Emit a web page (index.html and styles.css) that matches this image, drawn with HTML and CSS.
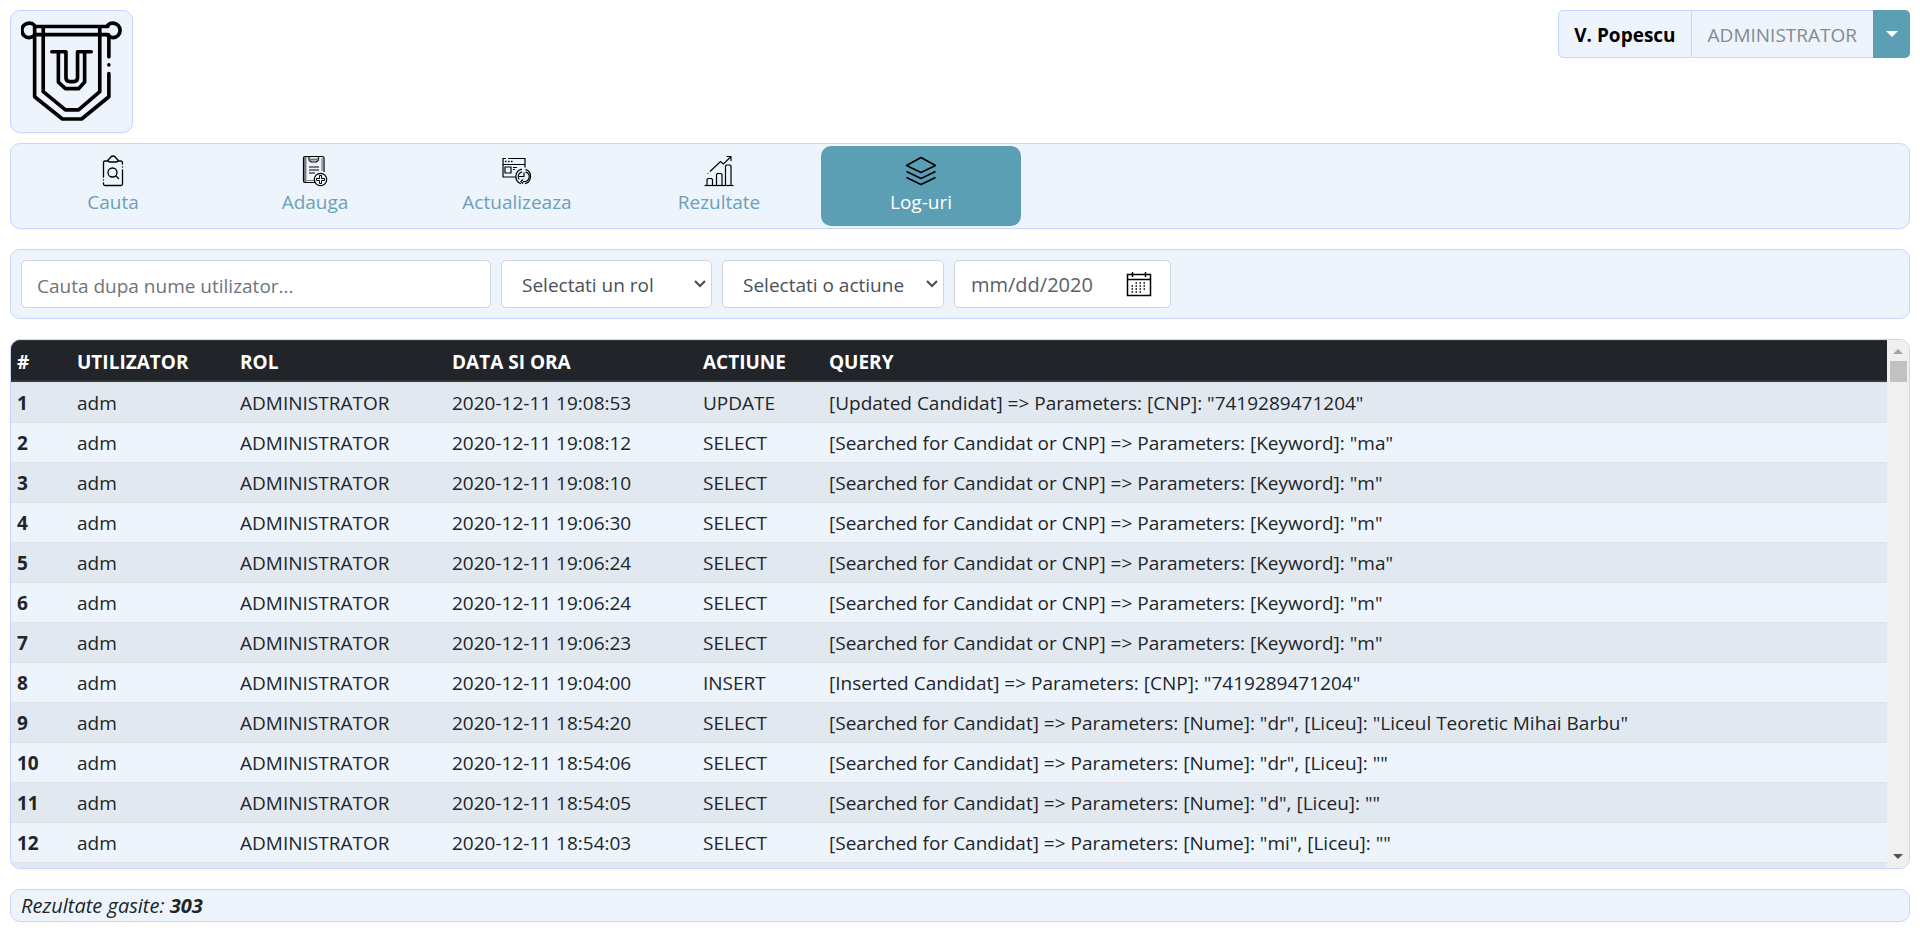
FILE: index.html
```html
<!DOCTYPE html>
<html lang="ro">
<head>
<meta charset="utf-8">
<title>Log-uri</title>
<link rel="stylesheet" href="styles.css">
</head>
<body>
<header class="top">
  <a class="logo panel" href="#" aria-label="Acasa">
    <svg viewBox="0 0 100 100" fill="none" stroke="#000" stroke-width="3.600" stroke-linecap="round" stroke-linejoin="round">
      <path d="M14 5.500H86M14 13.500H86"/>
      <path d="M13 14.500A7.200 7.200 0 1 1 13 4M86 14.500A7.200 7.200 0 1 0 86 4"/>
      <path d="M13.500 5V75L41 97H60L87 75V52"/>
      <path d="M87 14V35.500"/><path d="M87 43.500v.1"/>
      <path d="M22 7V70L44 88H57L78 70V7"/>
      <path d="M30.500 30.500H44.500V56Q44.500 60 48.500 60H52Q56 60 56 56V30.500H69.500M37 30.500V60.500L44 67H57L63 60.500V30.500"/>
    </svg>
  </a>
  <div class="user">
    <span class="user-name">V. Popescu</span>
    <span class="user-role">ADMINISTRATOR</span>
    <button class="user-toggle" type="button" aria-label="Meniu utilizator"><span class="caret"></span></button>
  </div>
</header>

<nav class="tabs panel">
  <a class="tab" href="#">
    <svg viewBox="0 0 32 32" fill="none" stroke="#000" stroke-width="1.300" stroke-linecap="round">
      <path d="M11 6H8Q6.500 6 6.500 8V22M6.500 25v.1M6.500 28V29Q6.500 30.500 8 30.500H24Q25.500 30.500 25.500 29V15M25.500 12v.1M25.500 9V8Q25.500 6 24 6H21"/>
      <path d="M11 5Q12 4 13 3Q14 1 16 1T19 3Q20 4 21 5Q21 7 19 7H13Q11 7 11 5Z"/>
      <circle cx="15.500" cy="17.500" r="4.500"/><path d="M19 21L21.500 23.500"/>
    </svg>
    <span>Cauta</span>
  </a>
  <a class="tab" href="#">
    <svg viewBox="0 0 32 32" fill="none" stroke="#000" stroke-width="1.200">
      <path d="M17 27.500H6Q4.500 27.500 4.500 26V3Q4.500 1.500 6 1.500H23.500Q25 1.500 25 3V17"/>
      <path d="M6.200 2V27" stroke="#777" stroke-width="2.400"/>
      <path d="M8 25.500H16M23 3V16" stroke="#777"/>
      <path d="M10 1.500V5L12 7H17.500L19.500 5V1.500"/><path d="M10 4.500H19.500" stroke="#777" stroke-width="2"/>
      <path d="M10 12H20M10 15H20M10 18H16"/>
      <circle cx="21.500" cy="24.500" r="6.200"/>
      <path d="M20.500 20.500H22.500V23.500H25.500V25.500H22.500V28.500H20.500V25.500H17.500V23.500H20.500Z" stroke-width="1"/>
    </svg>
    <span>Adauga</span>
  </a>
  <a class="tab" href="#">
    <svg viewBox="0 0 32 32" fill="none" stroke="#000" stroke-width="1.200">
      <path d="M15 22H2V3.500H5M7 3.500H24V12.500M2 9.500H24"/>
      <path d="M4 6.500H5.500M7 6.500H8.500M10 6.500H11.500" stroke-width="1.600"/>
      <path d="M4 12H10V18H4ZM12 12.500H16M12 14.500H14"/>
      <path d="M21 14.200A7.500 7.500 0 0 0 20 28.700M24.500 14.400A7.500 7.500 0 0 1 24 28.700"/>
      <path d="M21 16.800A5 5 0 0 0 18 24.500M24.500 16.800A5 5 0 0 1 22 26.500M23 17.500V21.500H18M22 24.500L20 26.500L22 28.500"/>
    </svg>
    <span>Actualizeaza</span>
  </a>
  <a class="tab" href="#">
    <svg viewBox="0 0 32 32" fill="none" stroke="#000" stroke-width="1.200">
      <path d="M1.500 30.500H30.500"/>
      <path d="M4 30V24.500L5 23.500H8.500L9.500 24.500V30M13.500 30V19.500L14.500 18.500H18L19 19.500V30M22.500 30V11L23.500 10H27L28 11V30"/>
      <path d="M5 19v-.8M7 16.500L17.500 6.500L20.500 9L27.500 2M23.500 1.500H28V6"/>
    </svg>
    <span>Rezultate</span>
  </a>
  <a class="tab active" href="#" aria-current="page">
    <svg viewBox="0 0 32 32" fill="none" stroke="#000" stroke-width="1.500" stroke-linejoin="round">
      <path d="M1.500 10.500L16 2.500L30.500 10.500L16 17.500ZM1.500 16.500L16 23.500L30.500 16.500M1.500 22.500L16 29.500L30.500 22.500"/>
    </svg>
    <span>Log-uri</span>
  </a>
</nav>

<form class="filters panel">
  <input class="field search" type="text" placeholder="Cauta dupa nume utilizator..." aria-label="Cauta dupa nume utilizator">
  <select class="field role" aria-label="Rol"><option>Selectati un rol</option></select>
  <select class="field action" aria-label="Actiune"><option>Selectati o actiune</option></select>
  <div class="field date">
    <input class="date-text" type="text" value="mm/dd/2020" aria-label="Data">
    <button class="date-button" type="button" aria-label="Alege data">
      <svg viewBox="0 0 26 26" fill="none" stroke="#000" stroke-width="1.500">
        <path d="M1.500 3.500H24.500V24.500H1.500ZM1.500 8.500H24.500"/>
        <path d="M6.500 1V6M19.500 1V6"/>
        <path d="M9.500 12H21M5.500 15H21M5.500 18H21M5.500 21H17" stroke-dasharray="1.500 2.500"/>
      </svg>
    </button>
  </div>
</form>

<section class="log panel">
  <div class="log-view">
    <table>
      <colgroup><col class="c-num"><col class="c-user"><col class="c-role"><col class="c-date"><col class="c-action"><col></colgroup>
      <thead>
        <tr><th>#</th><th>UTILIZATOR</th><th>ROL</th><th>DATA SI ORA</th><th>ACTIUNE</th><th>QUERY</th></tr>
      </thead>
      <tbody>
        <tr><th>1</th><td>adm</td><td>ADMINISTRATOR</td><td>2020-12-11 19:08:53</td><td>UPDATE</td><td>[Updated Candidat] =&gt; Parameters: [CNP]: "7419289471204"</td></tr>
        <tr><th>2</th><td>adm</td><td>ADMINISTRATOR</td><td>2020-12-11 19:08:12</td><td>SELECT</td><td>[Searched for Candidat or CNP] =&gt; Parameters: [Keyword]: "ma"</td></tr>
        <tr><th>3</th><td>adm</td><td>ADMINISTRATOR</td><td>2020-12-11 19:08:10</td><td>SELECT</td><td>[Searched for Candidat or CNP] =&gt; Parameters: [Keyword]: "m"</td></tr>
        <tr><th>4</th><td>adm</td><td>ADMINISTRATOR</td><td>2020-12-11 19:06:30</td><td>SELECT</td><td>[Searched for Candidat or CNP] =&gt; Parameters: [Keyword]: "m"</td></tr>
        <tr><th>5</th><td>adm</td><td>ADMINISTRATOR</td><td>2020-12-11 19:06:24</td><td>SELECT</td><td>[Searched for Candidat or CNP] =&gt; Parameters: [Keyword]: "ma"</td></tr>
        <tr><th>6</th><td>adm</td><td>ADMINISTRATOR</td><td>2020-12-11 19:06:24</td><td>SELECT</td><td>[Searched for Candidat or CNP] =&gt; Parameters: [Keyword]: "m"</td></tr>
        <tr><th>7</th><td>adm</td><td>ADMINISTRATOR</td><td>2020-12-11 19:06:23</td><td>SELECT</td><td>[Searched for Candidat or CNP] =&gt; Parameters: [Keyword]: "m"</td></tr>
        <tr><th>8</th><td>adm</td><td>ADMINISTRATOR</td><td>2020-12-11 19:04:00</td><td>INSERT</td><td>[Inserted Candidat] =&gt; Parameters: [CNP]: "7419289471204"</td></tr>
        <tr><th>9</th><td>adm</td><td>ADMINISTRATOR</td><td>2020-12-11 18:54:20</td><td>SELECT</td><td>[Searched for Candidat] =&gt; Parameters: [Nume]: "dr", [Liceu]: "Liceul Teoretic Mihai Barbu"</td></tr>
        <tr><th>10</th><td>adm</td><td>ADMINISTRATOR</td><td>2020-12-11 18:54:06</td><td>SELECT</td><td>[Searched for Candidat] =&gt; Parameters: [Nume]: "dr", [Liceu]: ""</td></tr>
        <tr><th>11</th><td>adm</td><td>ADMINISTRATOR</td><td>2020-12-11 18:54:05</td><td>SELECT</td><td>[Searched for Candidat] =&gt; Parameters: [Nume]: "d", [Liceu]: ""</td></tr>
        <tr><th>12</th><td>adm</td><td>ADMINISTRATOR</td><td>2020-12-11 18:54:03</td><td>SELECT</td><td>[Searched for Candidat] =&gt; Parameters: [Nume]: "mi", [Liceu]: ""</td></tr>
        <tr><td colspan="6"></td></tr>
      </tbody>
    </table>
  </div>
  <div class="scroll">
    <span class="scroll-up"></span>
    <span class="scroll-thumb"></span>
    <span class="scroll-down"></span>
  </div>
</section>

<footer class="total panel"><em>Rezultate gasite: <strong>303</strong></em></footer>
</body>
</html>
```
FILE: styles.css
```css
* { box-sizing: border-box; }

body {
  margin: 10px;
  background: #fff;
  color: #212529;
  font: 19px/30px "Open Sans", "Noto Sans", sans-serif;
}

.panel {
  background: #edf4fc;
  border: 1px solid #c8d4fb;
  border-radius: 10px;
}

.top {
  display: flex;
  justify-content: space-between;
  align-items: flex-start;
  margin-bottom: 10px;
}

.logo {
  display: block;
  padding: 10px;
  line-height: 0;
}
.logo svg { width: 101px; height: 101px; }

.user { display: flex; height: 48px; }
.user-name,
.user-role {
  padding: 9px 15px 7px;
  background: #edf4fc;
  border: 1px solid #c8d4fb;
}
.user-name {
  border-radius: 5px 0 0 5px;
  color: #000;
  font-weight: 700;
}
.user-role {
  padding: 9px 16px 7px;
  border-width: 1px 0;
  color: #868a8f;
}
.user-toggle {
  display: grid;
  place-items: center;
  width: 37px;
  padding: 0;
  border: 0;
  border-radius: 0 5px 5px 0;
  background: #5c9fb5;
}
.caret {
  border: 6px solid transparent;
  border-top-color: #fff;
  border-bottom: 0;
}

.tabs {
  display: flex;
  gap: 2px;
  padding: 2px;
  margin-bottom: 20px;
}
.tab {
  display: flex;
  flex-direction: column;
  align-items: center;
  width: 200px;
  height: 80px;
  padding-top: 9px;
  border-radius: 10px;
  color: #6ba0b8;
  text-decoration: none;
}
.tab svg { width: 32px; height: 32px; }
.tab.active { background: #5c9fb5; color: #fff; }

.filters {
  display: flex;
  gap: 10px;
  padding: 10px;
  margin-bottom: 20px;
}
.field {
  height: 48px;
  border: 1px solid #ced4da;
  border-radius: 5px;
  background-color: #fff;
  color: #495057;
  font: inherit;
}
.search { width: 470px; padding: 4px 15px 0; }
.search::placeholder { color: #6c757d; opacity: 1; }
.role { width: 211px; }
.action { width: 222px; }
select.field {
  appearance: none;
  padding: 2px 20px 0 20px;
  background-image: url("data:image/svg+xml,%3Csvg xmlns='http://www.w3.org/2000/svg' viewBox='0 0 12 8'%3E%3Cpath d='M1 1L6 6L11 1' fill='none' stroke='%23495057' stroke-width='2.200'/%3E%3C/svg%3E");
  background-repeat: no-repeat;
  background-position: right 5px center;
  background-size: 12px 8px;
}
.date {
  display: flex;
  align-items: center;
  width: 217px;
  padding: 0 18px 0 16px;
}
.date-text {
  flex: 1;
  min-width: 0;
  padding: 2px 0 0;
  border: 0;
  background: none;
  color: #5c6065;
  font: inherit;
  font-size: 20px;
}
.date-button {
  padding: 0;
  border: 0;
  background: none;
  line-height: 0;
}
.date-button svg { width: 26px; height: 26px; }

.log {
  display: flex;
  overflow: hidden;
  height: 530px;
  margin-bottom: 20px;
}
.log-view { flex: 1; overflow: hidden; }
table {
  width: 100%;
  border-collapse: separate;
  border-spacing: 0;
  table-layout: fixed;
  text-align: left;
}
.c-num { width: 60px; }
.c-user { width: 163px; }
.c-role { width: 212px; }
.c-date { width: 251px; }
.c-action { width: 126px; }
th, td {
  height: 40px;
  padding: 4px 6px;
  border-top: 1px solid #dee2e6;
  white-space: nowrap;
}
thead th {
  height: 42px;
  padding: 6px 6px 3px;
  border-top-color: #32383e;
  border-bottom: 2px solid #32383e;
  background: #212529;
  color: #fff;
}
tbody tr:nth-child(odd) { background: #e1e8ef; }

.scroll {
  display: flex;
  flex-direction: column;
  align-items: center;
  width: 22px;
  background: #f0f0f0;
}
.scroll-up {
  margin: 9px 0 7px;
  border: 5px solid transparent;
  border-top: 0;
  border-bottom-color: #a3a3a3;
}
.scroll-thumb { width: 17px; height: 21px; background: #c1c1c1; }
.scroll-down {
  margin: auto 0 9px;
  border: 5px solid transparent;
  border-bottom: 0;
  border-top-color: #505050;
}

.total {
  padding: 1px 10px 0;
  font-size: 20px;
}
```
